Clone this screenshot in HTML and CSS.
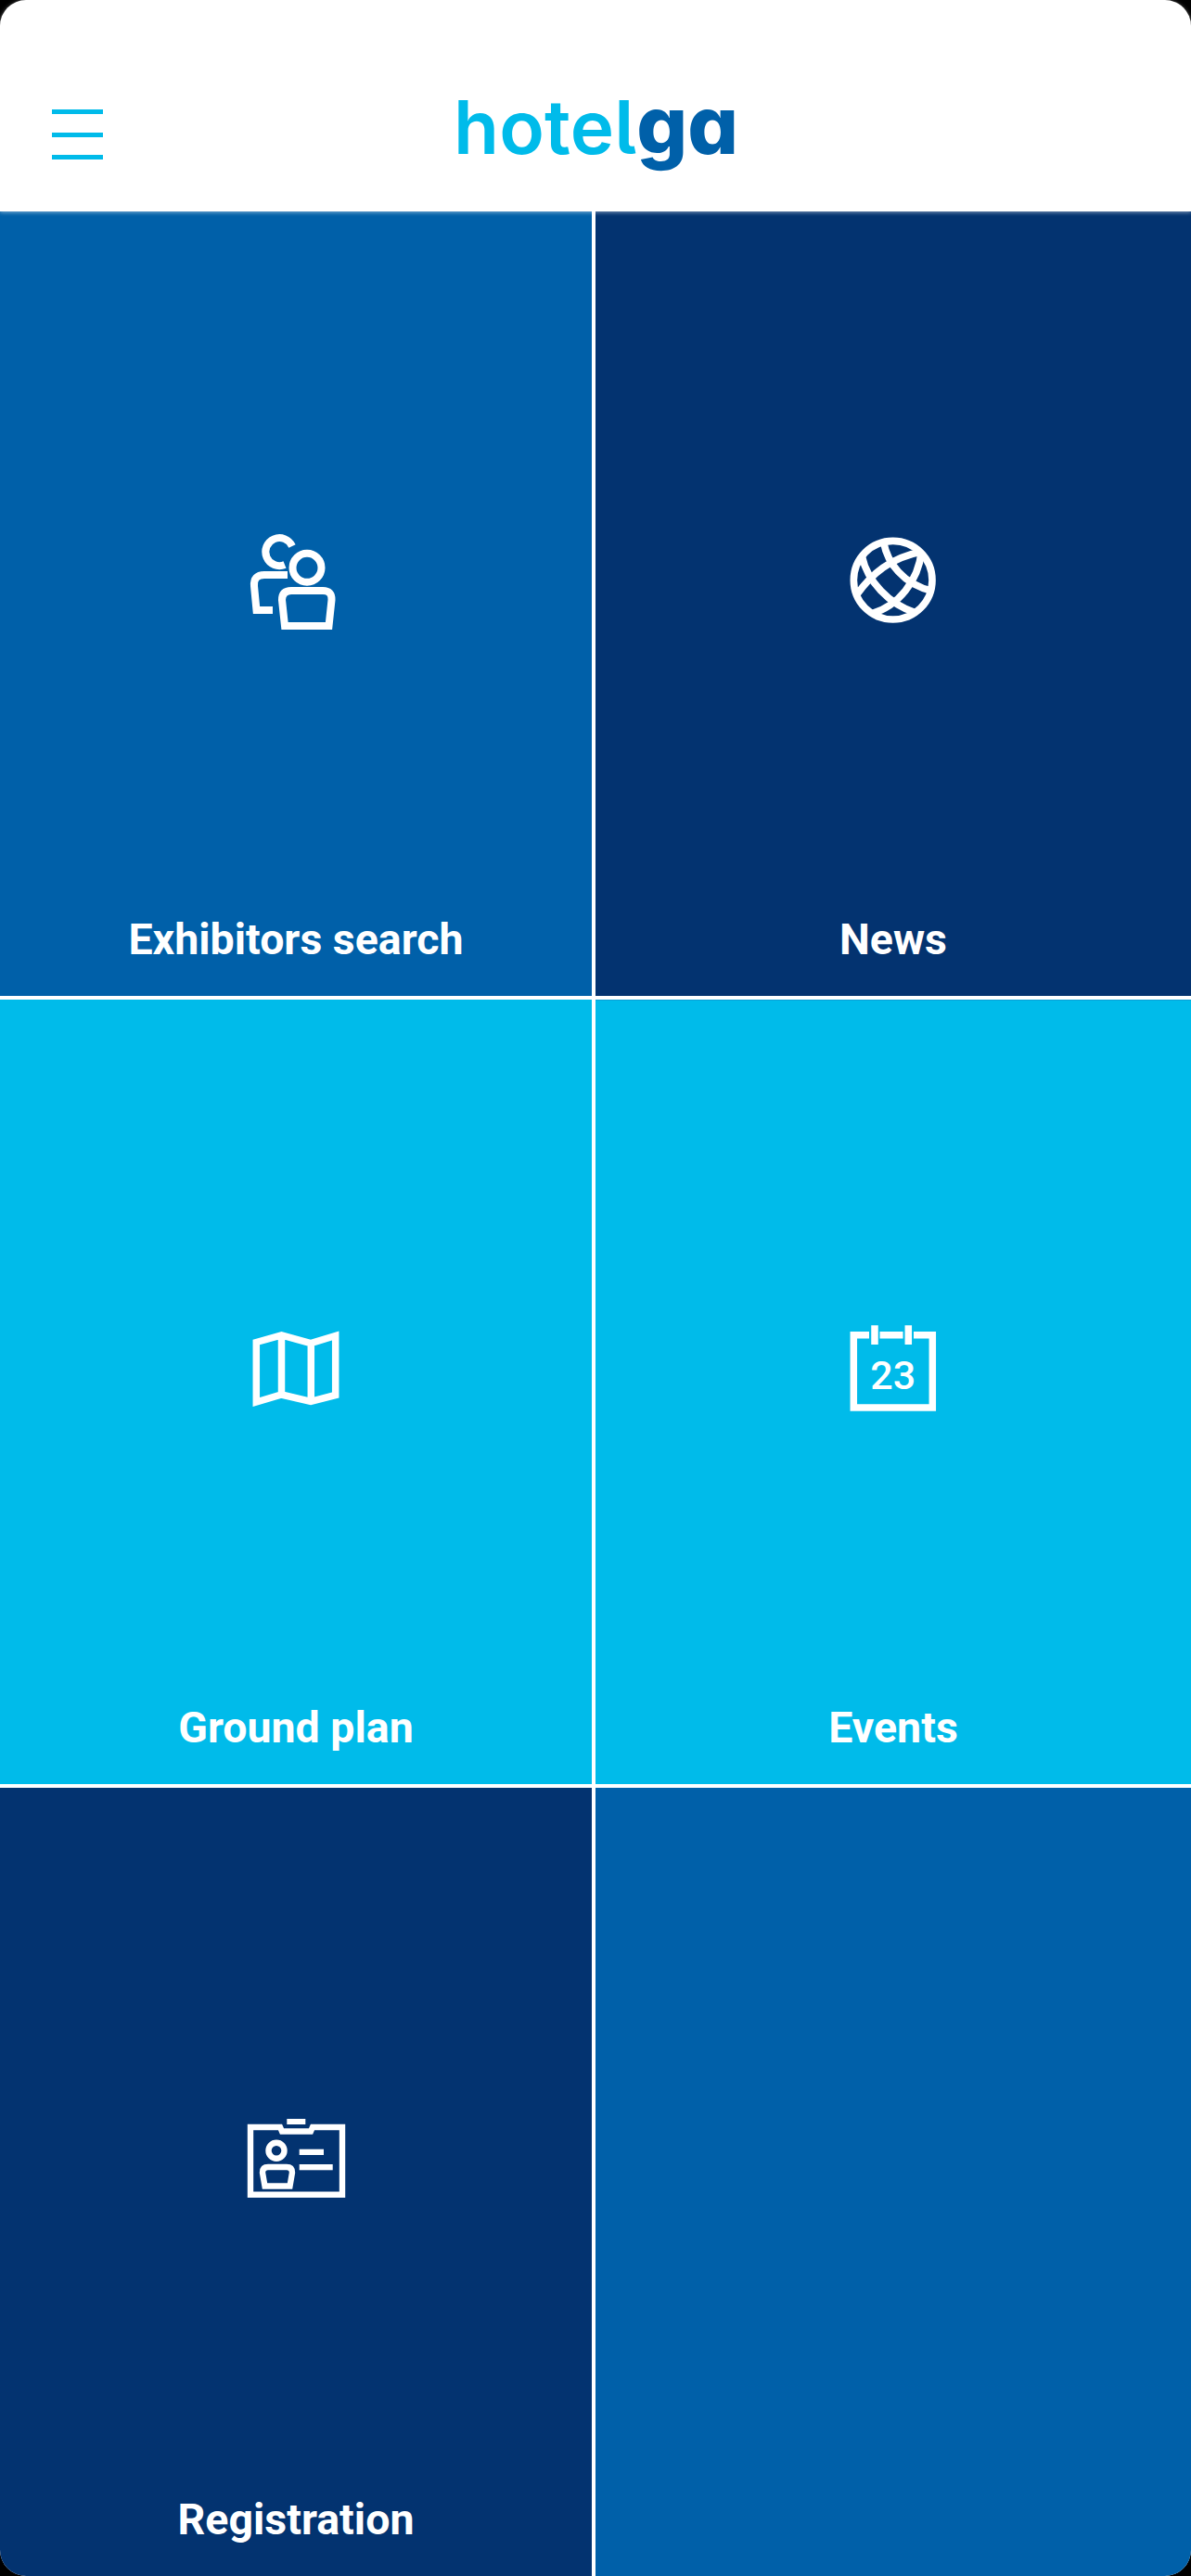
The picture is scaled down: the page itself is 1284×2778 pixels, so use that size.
FILE: index.html
```html
<!DOCTYPE HTML>
<html>
<head>
	<meta name="viewport" content="width=device-width">
	<meta charset="utf-8">
	<title>hotelga</title>
	<link rel="stylesheet" href="styles.css">
</head>
<body>
	<div class="header">
		<div class="menu-btn"><span></span><span></span><span></span></div>
		<div class="logo"><span class="logo-light">hotel</span><span class="logo-bold">ga</span></div>
	</div>
	<div class="tiles">
		<div class="tile blue">
			<svg class="icon" viewBox="4 0 150 150">
				<path d="M75 39 A15 15 0 1 0 67 59"/>
				<circle cx="91" cy="62.3" r="15.5"/>
				<path d="M67 125 L64 97 Q64 87 74 87 H108 Q118 87 117.5 97 L114.5 125 Z"/>
				<path d="M70 70 H45 Q33 70 34 82 L36.5 108 H54"/>
			</svg>
			<div class="label">Exhibitors search</div>
		</div>
		<div class="tile navy">
			<svg class="icon" viewBox="-6 0 450 450">
				<circle class="ring" cx="218" cy="227" r="127"/>
				<g class="lattice">
					<path d="M188 105 C200 170 250 240 345 262"/>
					<path d="M118 150 C135 230 205 305 290 332"/>
					<path d="M100 275 C150 205 210 155 310 135"/>
					<path d="M150 335 C235 310 300 230 310 135"/>
				</g>
			</svg>
			<div class="label">News</div>
		</div>
		<div class="tile cyan">
			<svg class="icon" viewBox="-6 0 150 150">
				<path class="wide" d="M26.3 47.5 L53.5 40 L85 48.5 L111.7 40.5 V104.5 L85 111.5 L53.5 104 L26.3 112 Z M53.5 40 V104 M85.3 48.5 V111.5"/>
			</svg>
			<div class="label">Ground plan</div>
		</div>
		<div class="tile cyan seam">
			<svg class="icon" viewBox="-2 0 150 150">
				<path class="wide" d="M47 39.7 H30.3 V118 H115.3 V39.7 H95 M58.5 39.7 H83.5 M53 29.3 V50 M89.3 29.3 V50"/>
				<text class="day" x="72.7" y="98">23</text>
			</svg>
			<div class="label">Events</div>
		</div>
		<div class="tile navy">
			<svg class="icon" viewBox="-6 -10 150 150">
				<path class="thin" d="M20 34 H52 L54 38.5 H85 L87 34 H119 V106.7 H20 Z"/>
				<rect class="solid" x="59.3" y="25" width="20" height="6"/>
				<circle class="thin" cx="48" cy="59.3" r="8.5"/>
				<path class="thin" d="M35.5 97.5 L33 83 Q33 77 39 77 H59 Q65 77 65 83 L62.5 97.5 Z"/>
				<rect class="solid" x="72.7" y="57.7" width="26.3" height="6.3"/>
				<rect class="solid" x="72.7" y="74" width="36" height="6.3"/>
			</svg>
			<div class="label">Registration</div>
		</div>
		<div class="tile blue"></div>
	</div>
</body>
</html>
```
FILE: styles.css
```css
* {
	box-sizing: border-box;
}

html, body {
	margin: 0;
	background: #000;
}

body {
	width: 1284px;
	height: 2778px;
	overflow: hidden;
	font-family: Roboto, sans-serif;
}

.header {
	height: 228px;
	background: #fff;
	border-radius: 28px 28px 0 0;
	position: relative;
	z-index: 1;
	box-shadow: 0 1px 4px rgba(255,255,255,0.5);
	display: flex;
	align-items: flex-start;
	padding: 118px 0 0 56px;
}

.menu-btn {
	width: 55px;
	display: flex;
	flex-direction: column;
	gap: 19.5px;
}

.menu-btn span {
	height: 5px;
	background: #00bbea;
}

.logo {
	margin: -31px 0 0 378px;
	font-family: Inter, sans-serif;
	font-size: 80px;
	font-feature-settings: "cv05", "cv11";
	line-height: 97px;
	white-space: nowrap;
}

.logo-light {
	color: #00bbea;
	font-weight: 600;
	letter-spacing: 0.2px;
}

.logo-bold {
	color: #0060a9;
	font-size: 86px;
	font-weight: 800;
}

.tiles {
	height: 2550px;
	background: #fff;
	border-radius: 0 0 28px 28px;
	overflow: hidden;
	display: grid;
	grid-template-columns: 638px 642px;
	grid-template-rows: 846px 846px 850px;
	column-gap: 4px;
	row-gap: 4px;
}

.tile {
	display: flex;
	flex-direction: column;
	align-items: center;
	padding-top: 322px;
	color: #fff;
}

.blue { background: #0060a9; }
.navy { background: #033370; }
.cyan { background: #00bbea; }

.seam {
	box-shadow: inset 0 1px 0 #0a9fd6;
}

.icon {
	width: 150px;
	height: 150px;
	fill: none;
	stroke: #fff;
	stroke-width: 8;
}

.icon .ring { stroke-width: 23; }
.icon .lattice { stroke-width: 23; }
.icon .wide { stroke-width: 7.5; }
.icon .thin { stroke-width: 6.4; }
.icon .solid { fill: #fff; stroke: none; }

.icon .day {
	fill: #fff;
	stroke: none;
	font-family: Roboto, sans-serif;
	font-size: 43px;
	font-weight: 500;
	text-anchor: middle;
}

.label {
	margin-top: auto;
	padding-bottom: 35px;
	font-size: 46.5px;
	font-weight: 700;
	line-height: 52px;
}
```
